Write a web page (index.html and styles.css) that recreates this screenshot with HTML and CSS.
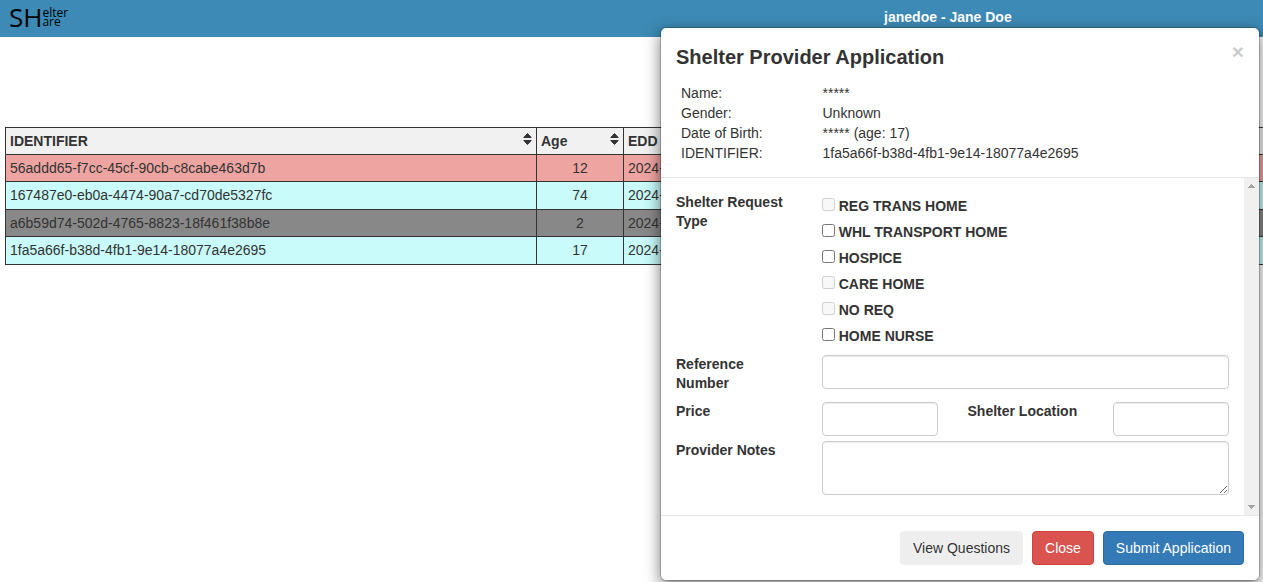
FILE: index.html
```html
<!DOCTYPE html>
<html lang="en">
<head>
<meta charset="utf-8">
<title>Shelter Share</title>
<link rel="stylesheet" href="styles.css">
</head>
<body>
<header class="navbar">
  <div class="logo"><span class="logo-big">SH</span><span class="logo-small"><span>elter</span><span>are</span></span></div>
  <div class="user">janedoe - Jane Doe</div>
</header>

<main class="content">
  <table class="list">
    <colgroup><col class="col-id"><col class="col-age"><col></colgroup>
    <thead>
      <tr>
        <th><div class="head">IDENTIFIER <svg class="sort" viewBox="0 0 9 12"><path d="M4.5 .5L8.2 4.5H.8zM.8 7.5h7.4L4.500 11.500z"/></svg></div></th>
        <th><div class="head">Age <svg class="sort" viewBox="0 0 9 12"><path d="M4.5 .5L8.2 4.5H.8zM.8 7.5h7.4L4.500 11.500z"/></svg></div></th>
        <th>EDD</th>
      </tr>
    </thead>
    <tbody>
      <tr class="red"><td>56addd65-f7cc-45cf-90cb-c8cabe463d7b</td><td class="age">12</td><td>2024-</td></tr>
      <tr class="cyan"><td>167487e0-eb0a-4474-90a7-cd70de5327fc</td><td class="age">74</td><td>2024-</td></tr>
      <tr class="gray"><td>a6b59d74-502d-4765-8823-18f461f38b8e</td><td class="age">2</td><td>2024-</td></tr>
      <tr class="cyan"><td>1fa5a66f-b38d-4fb1-9e14-18077a4e2695</td><td class="age">17</td><td>2024-</td></tr>
    </tbody>
  </table>
</main>

<section class="modal" role="dialog" aria-labelledby="title">
  <div class="modal-header">
    <div class="title-row">
      <h1 class="title" id="title">Shelter Provider Application</h1>
      <button class="dismiss" type="button" aria-label="Dismiss">×</button>
    </div>
    <dl class="info">
      <dt>Name:</dt><dd>*****</dd>
      <dt>Gender:</dt><dd>Unknown</dd>
      <dt>Date of Birth:</dt><dd>***** (age: 17)</dd>
      <dt>IDENTIFIER:</dt><dd>1fa5a66f-b38d-4fb1-9e14-18077a4e2695</dd>
    </dl>
  </div>
  <div class="modal-body">
    <form class="form" id="application">
      <div class="row row-types" role="group" aria-labelledby="types">
        <span class="label" id="types">Shelter Request Type</span>
        <div class="wide">
          <label class="check"><input type="checkbox" disabled>REG TRANS HOME</label>
          <label class="check"><input type="checkbox">WHL TRANSPORT HOME</label>
          <label class="check"><input type="checkbox">HOSPICE</label>
          <label class="check"><input type="checkbox" disabled>CARE HOME</label>
          <label class="check"><input type="checkbox" disabled>NO REQ</label>
          <label class="check"><input type="checkbox">HOME NURSE</label>
        </div>
      </div>
      <div class="row row-reference">
        <label class="label" for="reference">Reference Number</label>
        <input class="control wide" id="reference" type="text">
      </div>
      <div class="row row-price">
        <label class="label" for="price">Price</label>
        <input class="control" id="price" type="text">
        <label class="label" for="location">Shelter Location</label>
        <input class="control" id="location" type="text">
      </div>
      <div class="row">
        <label class="label" for="notes">Provider Notes</label>
        <textarea class="control notes wide" id="notes"></textarea>
      </div>
    </form>
    <div class="scrollbar" aria-hidden="true">
      <svg class="arrow" viewBox="0 0 7 4"><path d="M3 0h1v1h1v1h1v1h1v1H0V3h1V2h1V1h1z"/></svg>
      <svg class="arrow" viewBox="0 0 7 4"><path d="M0 0h7v1H6v1H5v1H4v1H3V3H2V2H1V1H0z"/></svg>
    </div>
  </div>
  <div class="modal-footer">
    <button class="btn" type="button">View Questions</button>
    <button class="btn btn-danger" type="button">Close</button>
    <button class="btn btn-primary" type="submit" form="application">Submit Application</button>
  </div>
</section>
</body>
</html>
```

FILE: styles.css
```css
* { box-sizing: border-box; }

body {
  margin: 0;
  font: 14px/20px "Liberation Sans", Arial, sans-serif;
  color: #333;
  background: #fff;
}

.navbar {
  display: grid;
  grid-template-columns: 70% 30%;
  height: 37px;
  background: #3c8ab5;
}
.logo {
  display: flex;
  padding: 4px 9px;
  font-family: "Open Sans", "Noto Sans", sans-serif;
  font-weight: 500;
  color: #000;
}
.logo-big { font-size: 26px; line-height: 26px; }
.logo-small {
  display: flex;
  flex-direction: column;
  padding-top: 4px;
  font-size: 12px;
  line-height: 9px;
}
.user { padding-top: 7px; font-weight: bold; color: #fff; }

.content { padding: 90px 0 0 5px; overflow: hidden; }
.list {
  width: 110%;
  table-layout: fixed;
  border-collapse: collapse;
}
.col-id { width: 531px; }
.col-age { width: 87px; }
.list th, .list td {
  height: 27px;
  padding: 3px 4px;
  border: 1px solid #333;
  text-align: left;
  vertical-align: top;
  white-space: nowrap;
}
.list tbody tr:nth-child(even) td { height: 28px; }
.list th { background: #f1f1f1; }
.list .age { text-align: center; }
.head { display: flex; justify-content: space-between; }
.sort {
  width: 9px;
  height: 12px;
  margin-top: 2px;
  fill: #333;
  stroke: #333;
  stroke-width: 1;
  stroke-linejoin: round;
}
.red { background: #eea5a2; }
.cyan { background: #c8fbfa; }
.gray { background: #888; }

.modal {
  position: absolute;
  top: 27px;
  right: 3px;
  width: 600px;
  background: #fff;
  background-clip: padding-box;
  border: 1px solid rgba(0, 0, 0, 0.2);
  border-radius: 6px;
  box-shadow: 0 5px 15px rgba(0, 0, 0, 0.5);
}
.modal-header { padding: 15px 15px 14px; border-bottom: 1px solid #e5e5e5; }
.title-row { display: flex; justify-content: space-between; }
.title { margin: 0; font-size: 20px; line-height: 28px; }
.dismiss {
  align-self: flex-start;
  padding: 0;
  border: 0;
  background: none;
  font: bold 21px/17px "Liberation Sans", Arial, sans-serif;
  color: #ccc;
}
.info {
  display: grid;
  grid-template-columns: 1fr 3fr;
  column-gap: 1px;
  margin: 12px 0 0;
  padding-left: 5px;
}
.info dd { margin: 0; }

.modal-body { display: flex; }
.form { flex: 1; padding: 15px 15px 20px; }
.row {
  display: grid;
  grid-template-columns: repeat(4, 1fr);
  column-gap: 30px;
  align-items: start;
}
.row-types { margin-bottom: 6px; }
.row-reference { margin-bottom: 9px; }
.row-price { margin-bottom: 5px; }
.wide { grid-column: span 3; }
.label { font-weight: bold; line-height: 19px; }
.check {
  display: flex;
  align-items: center;
  gap: 4px;
  height: 26px;
  font-weight: bold;
}
.check input { width: 13px; height: 13px; margin: 0 0 3px; }
.control {
  width: 100%;
  height: 34px;
  margin: 0;
  padding: 6px 12px;
  border: 1px solid #ccc;
  border-radius: 4px;
  background: #fff;
  box-shadow: inset 0 1px 1px rgba(0, 0, 0, 0.075);
  font: inherit;
  color: #555;
}
.notes { height: 54px; resize: vertical; }
.scrollbar {
  display: flex;
  flex-direction: column;
  justify-content: space-between;
  align-items: center;
  width: 15px;
  padding: 6px 0;
  background: #f0f0f0;
}
.arrow { width: 7px; height: 4px; fill: #a3a3a3; }

.modal-footer {
  display: flex;
  justify-content: flex-end;
  gap: 9px;
  padding: 15px;
  border-top: 1px solid #e5e5e5;
}
.btn {
  padding: 6px 12px;
  border: 1px solid #eee;
  border-radius: 4px;
  background: #eee;
  font: inherit;
  color: #333;
}
.btn-danger { background: #d9534f; border-color: #d43f3a; color: #fff; }
.btn-primary { background: #337ab7; border-color: #2e6da4; color: #fff; }
```
